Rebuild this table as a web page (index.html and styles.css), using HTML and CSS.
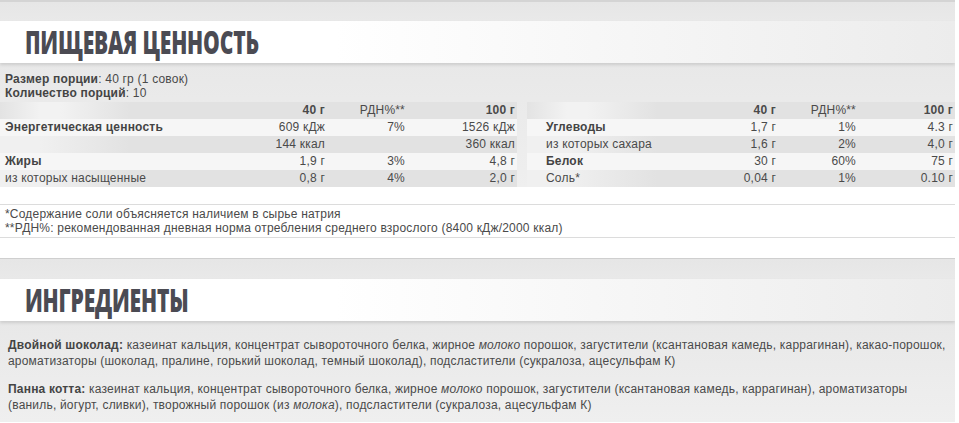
FILE: index.html
```html
<!DOCTYPE html>
<html lang="ru">
<head>
<meta charset="utf-8">
<title>Пищевая ценность</title>
<link rel="stylesheet" href="styles.css">
</head>
<body>
<div class="page">
  <section class="block">
    <div class="gap-top"></div>
    <h2 class="title-bar"><span class="title">ПИЩЕВАЯ ЦЕННОСТЬ</span></h2>
    <div class="panel">
      <div class="serving">
        <div><b>Размер порции</b>: 40 гр (1 совок)</div>
        <div><b>Количество порций</b>: 10</div>
      </div>
      <div class="tables">
        <div class="ntable left">
          <div class="row head"><span></span><span>40 г</span><span>РДН%**</span><span>100 г</span></div>
          <div class="row light"><span class="b">Энергетическая ценность</span><span>609 кДж</span><span>7%</span><span>1526 кДж</span></div>
          <div class="row dark"><span></span><span>144 ккал</span><span></span><span>360 ккал</span></div>
          <div class="row light"><span class="b">Жиры</span><span>1,9 г</span><span>3%</span><span>4,8 г</span></div>
          <div class="row dark"><span>из которых насыщенные</span><span>0,8 г</span><span>4%</span><span>2,0 г</span></div>
        </div>
        <div class="ntable right">
          <div class="row head"><span></span><span>40 г</span><span>РДН%**</span><span>100 г</span></div>
          <div class="row light"><span class="b">Углеводы</span><span>1,7 г</span><span>1%</span><span>4.3 г</span></div>
          <div class="row dark"><span>из которых сахара</span><span>1,6 г</span><span>2%</span><span>4,0 г</span></div>
          <div class="row light"><span class="b">Белок</span><span>30 г</span><span>60%</span><span>75 г</span></div>
          <div class="row dark"><span>Соль*</span><span>0,04 г</span><span>1%</span><span>0.10 г</span></div>
        </div>
      </div>
    </div>
    <div class="notes">
      <div>*Содержание соли объясняется наличием в сырье натрия</div>
      <div>**РДН%: рекомендованная дневная норма отребления среднего взрослого (8400 кДж/2000 ккал)</div>
    </div>
  </section>
  <section class="block second">
    <div class="gap-top"></div>
    <h2 class="title-bar"><span class="title">ИНГРЕДИЕНТЫ</span></h2>
    <div class="panel ingredients">
      <p><b>Двойной шоколад:</b> казеинат кальция, концентрат сывороточного белка, жирное <i>молоко</i> порошок, загустители (ксантановая камедь, каррагинан), <span class="nw">какао-порошок,</span> ароматизаторы (шоколад, пралине, горький шоколад, темный шоколад), подсластители (сукралоза, ацесульфам К)</p>
      <p><b>Панна котта:</b> казеинат кальция, концентрат сывороточного белка, жирное <i>молоко</i> порошок, загустители (ксантановая камедь, каррагинан), ароматизаторы (ваниль, йогурт, сливки), творожный порошок (из <i>молока</i>), подсластители (сукралоза, ацесульфам К)</p>
    </div>
  </section>
</div>
</body>
</html>
```

FILE: styles.css
```css
html, body {
  margin: 0;
  padding: 0;
  background: #ffffff;
}
body {
  font-family: "Liberation Sans", Arial, sans-serif;
  font-size: 12px;
  letter-spacing: 0.2px;
  color: #4a4a4a;
}
.page {
  width: 955px;
  overflow: hidden;
}
.block {
  background: #ffffff;
}
.gap-top {
  height: 19px;
  border-top: 2px solid #d4d4d4;
  background: linear-gradient(to bottom, #e6e6e6, #e9e9e9);
}
.second .gap-top {
  border-top: 1px solid #cfcfcf;
  height: 20px;
}
.title-bar {
  margin: 0;
  height: 42px;
  display: flex;
  align-items: center;
  background: linear-gradient(to right, #ffffff 0, #ffffff 35%, #ececec 100%);
  box-shadow: 0 2px 3px rgba(0, 0, 0, 0.12);
  position: relative;
  z-index: 1;
}
.title {
  display: inline-block;
  margin-left: 25px;
  font-family: "Open Sans", sans-serif;
  font-weight: 800;
  font-size: 31px;
  line-height: 42px;
  color: #4b4b53;
  transform: scaleX(0.68);
  transform-origin: left center;
  white-space: nowrap;
  letter-spacing: -0.3px;
}
.panel {
  background: linear-gradient(to bottom, #e8e8e8, #efefef);
}
.serving {
  padding: 9px 5px 2px 5px;
  line-height: 14px;
  color: #4a4a4a;
}
.serving b {
  color: #444;
}
.tables {
  display: flex;
  gap: 10px;
}
.ntable.left {
  width: 517px;
}
.ntable.right {
  width: 428px;
}
.row {
  display: grid;
  height: 17px;
  line-height: 17px;
}
.left .row {
  grid-template-columns: 245px 82px 80px 110px;
}
.right .row {
  grid-template-columns: 171px 80px 80px 97px;
}
.row span {
  text-align: right;
  padding-right: 2px;
  white-space: nowrap;
}
.row span:first-child {
  text-align: left;
  padding-left: 5px;
}
.right .row span:first-child {
  padding-left: 19px;
}
.row.head span {
  font-weight: 700;
  color: #4a4a4a;
}
.row.head span:nth-child(3) {
  font-weight: 400;
  color: #4a4a4a;
}
.row.head {
  background: linear-gradient(to right, #e3e3e3 0, #f2f2f2 40px, #f2f2f2 60px, #e2e2e2 130px, #e2e2e2 100%);
}
.row.dark {
  background: linear-gradient(to right, #f0f0f0 0, #f0f0f0 40px, #e2e2e2 130px, #e2e2e2 100%);
}
.row.light {
  background: #f6f6f6;
}
.row .b {
  font-weight: 700;
  color: #444;
}
.notes {
  margin-top: 17px;
  border-top: 1px solid #dcdcdc;
  border-bottom: 1px solid #dcdcdc;
  padding: 2px 5px;
  line-height: 14px;
  color: #4a4a4a;
  margin-bottom: 20px;
}
.ingredients {
  padding: 16px 6px 5px 8px;
  line-height: 16px;
  color: #4a4a4a;
  height: 80px;
}
.ingredients p {
  margin: 0 0 12px 0;
  width: 941px;
}
.ingredients b {
  color: #444;
}
.nw {
  white-space: nowrap;
}
```
